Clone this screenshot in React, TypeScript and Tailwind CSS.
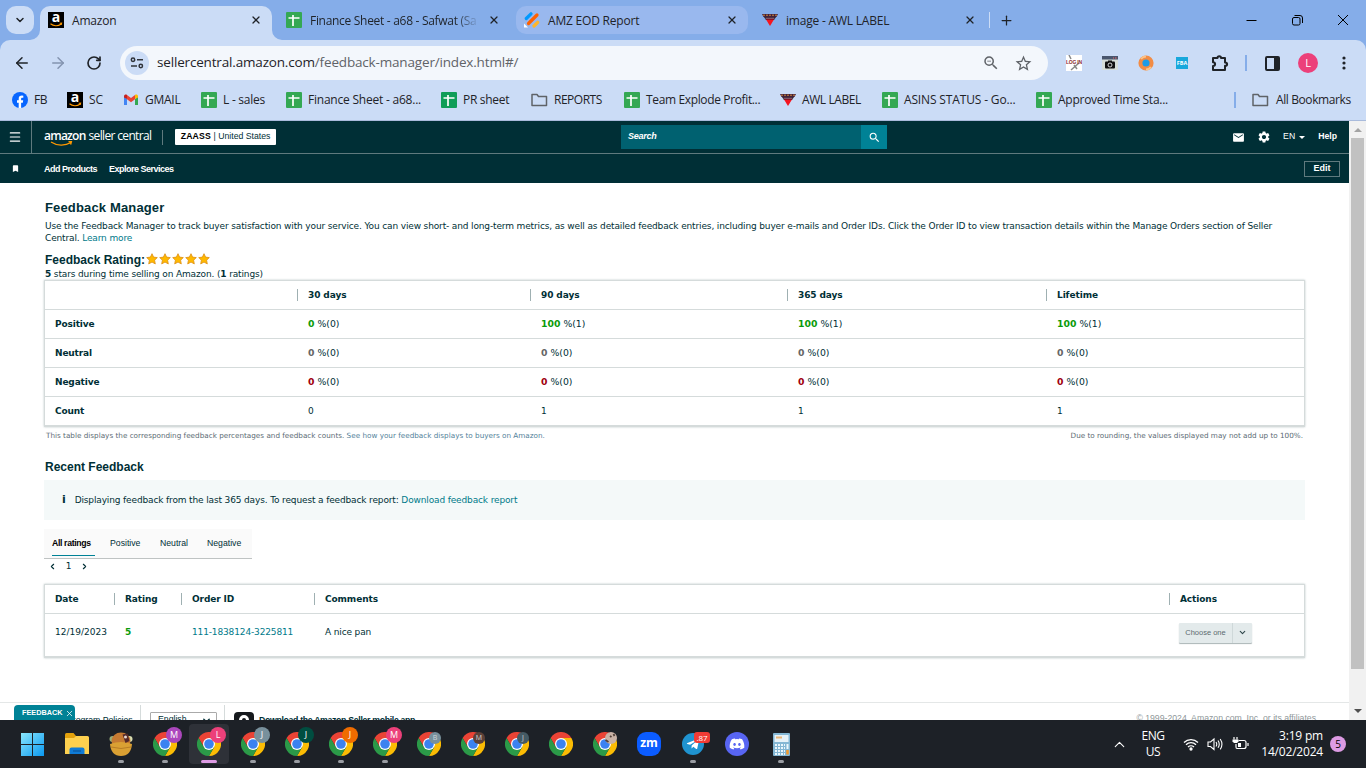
import type { ReactNode } from 'react';
import { ArrowLeft, ArrowRight, ChevronDown, ChevronLeft, ChevronRight, ChevronUp, Menu, Plus, RotateCw, X } from 'lucide-react';
import { FaDiscord, FaTelegramPlane } from 'react-icons/fa';
import { MdBookmark, MdEmail, MdSearch, MdSettings, MdStarBorder, MdZoomOut } from 'react-icons/md';

const UI = "font-['Open_Sans','Noto_Sans',sans-serif]";
const ARIAL = "font-['Liberation_Sans',Arial,sans-serif]";
const VERDANA = "font-['DejaVu_Sans',Verdana,sans-serif]";

function SheetIcon({ color = '#34a853' }: { color?: string }) {
  return (
    <svg width="16" height="16" viewBox="0 0 16 16" className="shrink-0">
      <rect width="16" height="16" rx="1" fill={color} />
      <path d="M2.5 6h11M7 3v11" stroke="#fff" strokeWidth="1.7" />
    </svg>
  );
}

function AmazonIcon() {
  return (
    <span className={`${UI} relative flex h-4 w-4 shrink-0 items-center justify-center bg-black text-[14px] font-bold leading-none text-white`}>
      <span className="-mt-[7px]">a</span>
      <svg width="16" height="16" viewBox="0 0 16 16" className="absolute inset-0">
        <path d="M2.500 11.800c3 2.400 7.500 2.500 10.400.4M11.700 11.200l1.900-.1-.4 1.900" stroke="#f90" strokeWidth="1.100" fill="none" />
      </svg>
    </span>
  );
}

function AwlIcon() {
  return (
    <svg width="16" height="16" viewBox="0 0 16 16" className="shrink-0">
      <path d="M0 2h16l-1.500 3h-13z" fill="#43213a" />
      <path d="M1 3.200h14" stroke="#d08a3a" strokeWidth="1" strokeDasharray="2 1" />
      <path d="M2 5h12l-2 3h-8z" fill="#201a26" />
      <path d="M3.500 6.200h9" stroke="#b06a80" />
      <path d="M4 7.500h8L8 14z" fill="#f4141f" />
    </svg>
  );
}

function FolderIcon() {
  return (
    <svg width="17" height="16" viewBox="0 0 17 16" className="shrink-0" fill="none" stroke="#5f6368" strokeWidth="1.500">
      <path d="M1 2.500h5l1.500 2h8v9H1z" strokeLinejoin="round" />
    </svg>
  );
}

function FacebookIcon() {
  return (
    <svg width="16" height="16" viewBox="0 0 16 16" className="shrink-0">
      <circle cx="8" cy="8" r="8" fill="#0866ff" />
      <path d="M6.700 16v-5.300H5V8.200h1.700V7c0-2.400 1.100-3.400 3.300-3.400l1.300.1v2.100h-.9c-1 0-1.300.4-1.300 1.300v1.100h2.100l-.4 2.500H9.100V16z" fill="#fff" />
    </svg>
  );
}

function GmailIcon() {
  return (
    <svg width="16" height="16" viewBox="0 0 16 16" className="shrink-0">
      <path d="M1 4v9h3V7z" fill="#4285f4" />
      <path d="M12 7v6h3V4z" fill="#34a853" />
      <path d="M1 4.500C1 2.500 3 2 4 3v4L1 5.500z" fill="#c5221f" />
      <path d="M15 4.500C15 2.500 13 2 12 3v4l3-1.500z" fill="#fbbc04" />
      <path d="M4 3l4 3 4-3v4.200L8 10.200 4 7.200z" fill="#ea4335" />
    </svg>
  );
}

function JotformIcon() {
  return (
    <svg width="16" height="16" viewBox="0 0 16 16" className="shrink-0" strokeLinecap="round" strokeWidth="3.200">
      <path d="M2.300 6.500l4.700-4.700" stroke="#0099ff" />
      <path d="M4.500 11.500l8.500-8.500" stroke="#ff6100" />
      <path d="M10 14l3.700-3.700" stroke="#ffb629" />
      <path d="M0 11.500v4h4z" fill="#fff" />
    </svg>
  );
}

const bookmarks: { label: string; icon: ReactNode; width: string; tracking: string }[] = [
  { label: 'FB', icon: <FacebookIcon />, width: 'w-[55px]', tracking: '-tracking-[0.5px]' },
  { label: 'SC', icon: <AmazonIcon />, width: 'w-[56px]', tracking: '-tracking-[0.2px]' },
  { label: 'GMAIL', icon: <GmailIcon />, width: 'w-[78px]', tracking: '-tracking-[0.25px]' },
  { label: 'L - sales', icon: <SheetIcon />, width: 'w-[85px]', tracking: '-tracking-[0.25px]' },
  { label: 'Finance Sheet - a68...', icon: <SheetIcon />, width: 'w-[155px]', tracking: '-tracking-[0.22px]' },
  { label: 'PR sheet', icon: <SheetIcon color="#0f9d58" />, width: 'w-[90px]', tracking: '-tracking-[0.3px]' },
  { label: 'REPORTS', icon: <FolderIcon />, width: 'w-[93px]', tracking: '-tracking-[0.5px]' },
  { label: 'Team Explode Profit...', icon: <SheetIcon />, width: 'w-[156px]', tracking: '-tracking-[0.36px]' },
  { label: 'AWL LABEL', icon: <AwlIcon />, width: 'w-[102px]', tracking: '-tracking-[0.4px]' },
  { label: 'ASINS STATUS - Go...', icon: <SheetIcon />, width: 'w-[154px]', tracking: '-tracking-[0.15px]' },
  { label: 'Approved Time Sta...', icon: <SheetIcon />, width: 'w-[160px]', tracking: '-tracking-[0.26px]' },
];

function TabStrip() {
  return (
    <div className="flex h-10 items-start bg-[#85ade9] pl-1.5 pt-1.5 text-[12px] -tracking-[0.2px] text-[#1f2328]">
      <button className="flex h-7 w-7 items-center justify-center rounded-[10px] bg-[#cbdcf6]">
        <ChevronDown size={12} strokeWidth={3} />
      </button>
      <div className="relative ml-1.5 flex h-[34px] w-[232px] items-center rounded-t-[10px] bg-[#cbdcf6] pb-1.5 pl-2">
        <svg width="10" height="10" className="absolute -left-2.5 bottom-0" fill="#cbdcf6"><path d="M10 0v10H0A10 10 0 0 0 10 0z" /></svg>
        <svg width="10" height="10" className="absolute -right-2.5 bottom-0" fill="#cbdcf6"><path d="M0 0v10h10A10 10 0 0 1 0 0z" /></svg>
        <AmazonIcon />
        <span className="ml-2 w-[178px] pt-0.5">Amazon</span>
        <X size={12} strokeWidth={2.500} />
      </div>
      <div className="flex h-7 w-[244px] items-center pl-3.5">
        <SheetIcon />
        <span className="ml-2 w-[170px] overflow-hidden whitespace-nowrap pt-0.5 -tracking-[0.3px] [mask-image:linear-gradient(to_right,#000_85%,transparent)]">Finance Sheet - a68 - Safwat (Sa</span>
        <X size={12} strokeWidth={2.500} className="ml-2" />
      </div>
      <div className="flex h-7 w-[232px] items-center rounded-[10px] bg-[#99b8ee] pl-2">
        <JotformIcon />
        <span className="ml-2 w-[178px] pt-0.5">AMZ EOD Report</span>
        <X size={12} strokeWidth={2.500} />
      </div>
      <div className="flex h-7 w-[241px] items-center pl-3.5">
        <AwlIcon />
        <span className="ml-2 w-[178px] pt-0.5">image - AWL LABEL</span>
        <X size={12} strokeWidth={2.500} />
      </div>
      <div className="mt-1.5 h-4 w-px bg-[#cbdcf6]" />
      <div className="flex h-7 w-8 items-center justify-center"><Plus size={15} /></div>
      <div className="ml-auto flex h-7 items-center pr-[17px] text-black">
        <svg width="104" height="12" viewBox="0 0 104 12" fill="none" stroke="currentColor">
          <path d="M1.500 6.500h10M93 1l10 10M103 1L93 11" />
          <rect x="47.500" y="3.500" width="7.500" height="7.500" rx="1.500" />
          <path d="M49.500 1.500h5.500a2.500 2.500 0 0 1 2.500 2.500v5" />
        </svg>
      </div>
    </div>
  );
}

function Toolbar() {
  return (
    <div className="flex h-[46px] items-center pl-[13px] text-[#1f2328]">
      <ArrowLeft size={18} strokeWidth={2} />
      <ArrowRight size={18} className="ml-[18px] text-[#8494b0]" strokeWidth={2} />
      <RotateCw size={16} className="ml-[19px]" strokeWidth={2.500} />
      <div className="ml-[18px] flex h-[34px] w-[928px] items-center rounded-full bg-[#f3f7fc] pl-[5px] pr-[15px]">
        <span className="flex h-6 w-6 items-center justify-center rounded-full bg-[#cbdcf6]">
          <svg width="14" height="14" viewBox="0 0 14 14" fill="none" stroke="#30343a" strokeWidth="1.500">
            <circle cx="3" cy="3.700" r="1.700" /><path d="M7 3.700H13M1 10h6" /><circle cx="10.800" cy="10" r="1.700" />
          </svg>
        </span>
        <span className="ml-2 whitespace-nowrap text-[13.500px] leading-none -tracking-[0.17px] text-[#5f6368]">
          <span className="text-[#1f2328]">sellercentral.amazon.com</span>/feedback-manager/index.html#/
        </span>
        <MdZoomOut size={18} className="ml-auto text-[#5f6368]" />
        <MdStarBorder size={19} className="ml-3.5 text-[#5f6368]" />
      </div>
      <svg width="16" height="16" viewBox="0 0 16 16" className="ml-[18px]">
        <rect width="16" height="16" fill="#fff" />
        <path d="M3 0l2 4M13 8L5 15M8 10l3 4" stroke="#888" strokeWidth="1.500" />
        <text x="0" y="8.500" fontSize="5" fontWeight="bold" textLength="16" fill="#8c2b31" fontFamily="Liberation Sans">LOG IN</text>
      </svg>
      <svg width="16" height="14" viewBox="0 0 16 14" className="ml-5">
        <rect width="16" height="14" fill="#d7ded9" /><rect width="16" height="3.500" fill="#49566e" />
        <path d="M11 2h1M13 2h1.500" stroke="#e66" /><rect x="3" y="5.500" width="10" height="7" rx="1" fill="#111" /><rect x="6" y="4.500" width="4" height="2" fill="#111" />
        <circle cx="8" cy="9" r="2" fill="none" stroke="#fff" strokeWidth=".8" />
      </svg>
      <svg width="16" height="16" viewBox="0 0 16 16" className="ml-5">
        <circle cx="8" cy="8" r="5.600" fill="#1d9be6" stroke="#f28c45" strokeWidth="4" />
        <path d="M3 4a6.400 6.400 0 0 1 5-2.500M13 12a6.400 6.400 0 0 1-5 2.400" stroke="#fbc489" strokeWidth="2" fill="none" />
      </svg>
      <span className="ml-[22px] flex h-3 w-3 items-center justify-center bg-[#18a8dc] text-[5.500px] font-bold text-white">FBA</span>
      <svg width="18" height="18" viewBox="0 0 18 18" className="ml-[23px]" fill="none" stroke="#1f2328" strokeWidth="2">
        <path d="M2 4h4.500c0-2.500 3.500-2.500 3.500 0h4v4.500c2.800 0 2.800 3.300 0 3.300V16H2v-4c2.800 0 2.800-3.800 0-3.800z" strokeLinejoin="round" />
      </svg>
      <div className="ml-4 h-4 w-0.5 bg-[#85ade9]" />
      <svg width="15" height="15" viewBox="0 0 15 15" className="ml-[18px]">
        <rect x="1" y="1" width="13" height="13" rx="1" fill="none" stroke="#1f2328" strokeWidth="2" /><path d="M9 1h5v13H9z" fill="#1f2328" />
      </svg>
      <span className="ml-[18px] flex h-5 w-5 items-center justify-center rounded-full bg-[#ec407a] text-[11px] text-white">L</span>
      <svg width="4" height="16" viewBox="0 0 4 16" className="ml-6" fill="#1f2328">
        <circle cx="2" cy="3" r="1.600" /><circle cx="2" cy="8" r="1.600" /><circle cx="2" cy="13" r="1.600" />
      </svg>
    </div>
  );
}

function Bookmarks() {
  return (
    <div className="flex h-[34px] items-center pb-[7px] pl-3 pt-px text-[12px] text-[#1f2328]">
      {bookmarks.map((b) => (
        <div key={b.label} className={`${b.width} flex shrink-0 items-center gap-1.5 whitespace-nowrap`}>
          {b.icon}
          <span className={b.tracking}>{b.label}</span>
        </div>
      ))}
      <div className="ml-[38px] h-4 w-0.5 bg-[#85ade9]" />
      <div className="ml-4 flex items-center gap-[7px] whitespace-nowrap -tracking-[0.4px]"><FolderIcon />All Bookmarks</div>
    </div>
  );
}

function SellerHeader() {
  return (
    <header className={`${ARIAL} text-white`}>
      <div className="flex h-[33px] items-center border-b border-[#5f7a7e] bg-[#002f36]">
        <div className="flex h-full w-8 items-center justify-center border-r border-[#5f7a7e]">
          <Menu size={14} strokeWidth={2} className="-ml-px -mt-px" />
        </div>
        <div className={`${UI} relative ml-3 flex w-[107px] items-baseline gap-[3px] whitespace-nowrap pb-0.5 text-[12px] leading-none`}>
          <span className="font-semibold -tracking-[0.75px]">amazon</span>
          <span className="-tracking-[0.66px]">seller central</span>
          <svg width="24" height="6" viewBox="0 0 24 6" className="absolute left-1.5 top-[11px]" fill="none" stroke="#f90" strokeWidth="1.200">
            <path d="M1 1c6 4 14 4 20 .6M18.500.7h3l-.8 3" />
          </svg>
        </div>
        <div className="ml-[11px] h-[15px] w-px bg-[#5f7a7e]" />
        <div className="ml-3 flex h-4 w-[101px] items-center justify-center whitespace-nowrap rounded-[1px] bg-white text-[8.700px] text-[#002f36]">
          <b className="tracking-[0.2px] text-black">ZAASS</b>&nbsp;| United States
        </div>
        <div className="ml-[345px] flex h-6 w-60 items-center bg-[#006170] pl-[7px] text-[9px] font-bold italic -tracking-[0.25px]">Search</div>
        <div className="flex h-6 w-[26px] items-center justify-center bg-[#008296]"><MdSearch size={13} /></div>
        <div className="ml-auto flex items-center pr-3 text-[8.700px] font-bold">
          <MdEmail size={13} />
          <MdSettings size={14} className="ml-3" />
          <span className="ml-3 font-normal">EN</span>
          <span className="ml-1 border-x-[3px] border-t-[3px] border-x-transparent border-t-white" />
          <span className="ml-[13px]">Help</span>
        </div>
      </div>
      <div className="flex h-[29px] items-center bg-[#002f36] text-[9px] font-bold -tracking-[0.5px]">
        <MdBookmark size={9} className="ml-[11px]" />
        <span className="ml-6 pt-[3px]">Add Products</span>
        <span className="ml-3 pt-[3px]">Explore Services</span>
        <button className="ml-auto mr-[9px] h-4 w-9 border border-[#5f7a7e] tracking-normal">Edit</button>
      </div>
    </header>
  );
}

const periods = ['30 days', '90 days', '365 days', 'Lifetime'];
const rows = [
  { label: 'Positive', color: 'text-[#0a9b0a]', values: [[0, 0], [100, 1], [100, 1], [100, 1]] },
  { label: 'Neutral', color: 'text-[#666]', values: [[0, 0], [0, 0], [0, 0], [0, 0]] },
  { label: 'Negative', color: 'text-[#a0000f]', values: [[0, 0], [0, 0], [0, 0], [0, 0]] },
];
const counts = [0, 1, 1, 1];
const cols = 'grid grid-cols-[252px_233px_257px_259px_1fr] items-center';

function HeaderCell({ children }: { children: ReactNode }) {
  return <div className="flex h-3 items-center border-l border-[#9fb0b2] pl-2.5 font-bold -tracking-[0.1px]">{children}</div>;
}

function RatingsTable() {
  return (
    <div className="h-[147px] border border-b-2 border-[#d5dbdb] shadow-[0_0_2px_#bcc6c6]">
      <div className={`${cols} h-7`}>
        <span />
        {periods.map((p) => <HeaderCell key={p}>{p}</HeaderCell>)}
      </div>
      {rows.map((row) => (
        <div key={row.label} className={`${cols} h-[29px] border-t border-[#d5dbdb]`}>
          <b className="pl-2.5">{row.label}</b>
          {row.values.map(([pct, count], i) => (
            <span key={i} className="pl-[11px] text-[9.300px] tracking-normal">
              <b className={row.color}>{pct}</b> %({count})
            </span>
          ))}
        </div>
      ))}
      <div className={`${cols} h-[29px] border-t border-[#d5dbdb]`}>
        <b className="pl-2.5">Count</b>
        {counts.map((c, i) => <span key={i} className="pl-[11px]">{c}</span>)}
      </div>
    </div>
  );
}

function StarRow() {
  return (
    <span className="-mt-[3px] ml-px flex gap-px">
      {[0, 1, 2, 3, 4].map((i) => (
        <svg key={i} width="12" height="12" viewBox="0 0 12 12">
          <path d="M6 .7l1.600 3.400 3.700.5-2.700 2.600.7 3.700L6 9.100l-3.300 1.800.7-3.700L.7 4.600l3.700-.5z" fill="#ffb900" stroke="#dd8f16" strokeWidth=".8" />
        </svg>
      ))}
    </span>
  );
}

function FeedbackList() {
  const grid = 'grid grid-cols-[69px_67px_133px_855px_1fr] items-center';
  return (
    <div className="mt-[11px] h-[74px] border border-b-2 border-[#d5dbdb] shadow-[0_0_2px_#bcc6c6]">
      <div className={`${grid} h-7`}>
        <b className="pl-2.5">Date</b>
        <HeaderCell>Rating</HeaderCell>
        <HeaderCell>Order ID</HeaderCell>
        <HeaderCell>Comments</HeaderCell>
        <HeaderCell>Actions</HeaderCell>
      </div>
      <div className={`${grid} h-9 border-t border-[#d5dbdb]`}>
        <span className="pl-2.5 tracking-normal">12/19/2023</span>
        <b className="pl-[11px] text-[#0a9b0a]">5</b>
        <span className="pl-[11px] text-[#007a8a]">111-1838124-3225811</span>
        <span className="pl-[11px]">A nice pan</span>
        <div className={`${ARIAL} ml-2.5 mt-0.5 flex h-5 w-[73px] items-center rounded-[1px] bg-[#e3eaeb] text-[7.500px] tracking-normal text-[#5c6b70] shadow-[0_1px_1px_#aab5b6]`}>
          <span className="flex h-full w-[54px] items-center justify-center border-r border-[#cfd8d9]">Choose one</span>
          <ChevronDown size={9} className="ml-[5px] text-[#30474c]" strokeWidth={3} />
        </div>
      </div>
    </div>
  );
}

function PageFooter() {
  return (
    <footer className={`${ARIAL} relative mt-[44px] h-[18px] overflow-hidden border-t border-[#e4e7e7] text-[8.700px] text-[#002f36]`}>
      <div className="flex h-9 items-center whitespace-nowrap">
        <span className="w-[140px] pl-[67px]">Program Policies</span>
        <span className="-mt-4 h-4 w-px bg-[#d5dbdb]" />
        <span className="relative -top-px ml-[9px] flex h-4 w-[67px] items-center justify-between rounded-[1px] border border-[#aaa] pl-[7px] pr-1">
          English<ChevronDown size={11} strokeWidth={3} />
        </span>
        <span className="-mt-4 ml-[7px] h-4 w-px bg-[#d5dbdb]" />
        <span className="relative top-px ml-[9px] flex h-5 w-5 items-center justify-center rounded-sm bg-[#16191d]">
          <span className="-mt-0.5 h-3 w-2.5 rounded-full border-[3px] border-white" />
        </span>
        <span className="ml-[5px] font-bold -tracking-[0.3px]">Download the Amazon Seller mobile app</span>
        <span className="ml-auto pb-1 pr-[33px] text-[#8f989a]">© 1999-2024, Amazon.com, Inc. or its affiliates</span>
      </div>
      <div className="absolute left-3.5 top-[2px] flex h-5 w-[61px] items-start gap-0.5 rounded-t-sm bg-[#008296] pl-2 pt-1 text-[7.300px] font-bold leading-[8px] text-white">
        FEEDBACK<X size={9} />
      </div>
    </footer>
  );
}

function SellerPage() {
  return (
    <div className="flex h-[599px]">
      <div className="w-[1349px] bg-white">
        <SellerHeader />
        <main className={`${VERDANA} ml-11 w-[1261px] text-[9px] leading-3 -tracking-[0.14px] text-[#002f36]`}>
          <h1 className={`${ARIAL} pl-px pt-[17px] text-[13px] font-bold leading-4 tracking-[0.15px]`}>Feedback Manager</h1>
          <p className="mt-[4px] w-[1240px] whitespace-nowrap pl-px">
            Use the Feedback Manager to track buyer satisfaction with your service. You can view short- and long-term metrics, as well as detailed feedback entries, including buyer e-mails and Order IDs. Click the Order ID to view transaction details within the Manage Orders section of Seller
            <br />
            Central. <a className="text-[#007a8a]">Learn more</a>
          </p>
          <h2 className={`${ARIAL} mt-[9px] flex items-center pl-px text-[12px] font-bold leading-[15px] tracking-normal`}>
            Feedback Rating:<StarRow />
          </h2>
          <p className="pl-px"><b>5</b> stars during time selling on Amazon. (<b>1</b> ratings)</p>
          <RatingsTable />
          <div className="mt-[3px] flex justify-between px-0.5 text-[7.240px] tracking-normal text-[#5b6b74]">
            <span>This table displays the corresponding feedback percentages and feedback counts. <a className="text-[#52829a]">See how your feedback displays to buyers on Amazon.</a></span>
            <span>Due to rounding, the values displayed may not add up to 100%.</span>
          </div>
          <h2 className={`${ARIAL} mt-[17px] pl-px text-[12px] font-bold leading-4 tracking-normal`}>Recent Feedback</h2>
          <div className="mt-[5px] flex h-10 items-center bg-[#f4f9f9] pl-[18px]">
            <b className="mr-[9px] text-[11px]">i</b>
            Displaying feedback from the last 365 days. To request a feedback report:&nbsp;<a className="text-[#007a8a]">Download feedback report</a>
          </div>
          <nav className={`${ARIAL} mt-[9px] flex h-[30px] w-52 border-b border-[#bfc3c3] bg-[#fafafa] pl-2 text-[8.700px] leading-[28px] tracking-normal`}>
            <span className="h-[27px] w-[43px] border-b border-[#008296] font-bold text-black -tracking-[0.35px]">All ratings</span>
            <span className="ml-[15px] w-[50px]">Positive</span>
            <span className="w-[47px]">Neutral</span>
            <span>Negative</span>
          </nav>
          <div className="flex h-3.5 items-center pl-1">
            <ChevronLeft size={9} strokeWidth={3} />
            <span className="mx-2 w-[7px] text-center">1</span>
            <ChevronRight size={9} strokeWidth={3} />
          </div>
          <FeedbackList />
        </main>
        <PageFooter />
      </div>
      <div className="flex w-[17px] flex-col items-center bg-[#f1f1f1]">
        <span className="mt-[7px] border-x-4 border-b-4 border-x-transparent border-b-[#a3a3a3]" />
        <span className="mt-1.5 h-[531px] w-[13px] bg-[#c1c1c1]" />
        <span className="mt-[40px] border-x-4 border-t-4 border-x-transparent border-t-[#505050]" />
      </div>
    </div>
  );
}

function ChromeIcon() {
  return (
    <svg width="24" height="24" viewBox="0 0 24 24">
      <path d="M1.600 6A12 12 0 0 1 22.400 6H12L6.800 15z" fill="#ea4335" />
      <path d="M22.400 6A12 12 0 0 1 12 24l5.200-9L12 6z" fill="#fbbc04" />
      <path d="M12 24A12 12 0 0 1 1.600 6l5.200 9h10.400z" fill="#2b9a48" />
      <circle cx="12" cy="12" r="6" fill="#fff" />
      <circle cx="12" cy="12" r="4.800" fill="#3b82f0" />
    </svg>
  );
}

const profiles = [
  { letter: 'M', badge: 'bg-[#ab47bc]', open: true },
  { letter: 'L', badge: 'bg-[#ec407a]', open: true, active: true },
  { letter: 'J', badge: 'bg-[#78909c]', open: true },
  { letter: 'J', badge: 'bg-[#004d40]', open: true },
  { letter: 'J', badge: 'bg-[#ef6c00]', open: true },
  { letter: 'M', badge: 'bg-[#ec407a]', open: true },
  { letter: 'B', badge: 'bg-[#78909c]' },
  { letter: 'M', badge: 'bg-[#5d4037]' },
  { letter: 'J', badge: 'bg-[#455a64]' },
];

function Slot({ children, open, active }: { children: ReactNode; open?: boolean; active?: boolean }) {
  return (
    <div className="relative flex h-12 w-11 shrink-0 items-center justify-center">
      {active && <span className="absolute inset-x-0.5 inset-y-1 rounded bg-[#2e3138]" />}
      <span className="relative flex">{children}</span>
      {open && <span className={active ? 'absolute bottom-[5px] h-[3px] w-4 rounded-full bg-[#dd9be4]' : 'absolute bottom-[5px] h-[3px] w-1.5 rounded-full bg-[#9a9da3]'} />}
    </div>
  );
}

function Taskbar() {
  return (
    <div className={`${UI} flex h-12 items-center bg-[#1d2127] pl-[11px] text-[12px] text-white`}>
      <Slot>
        <svg width="23" height="23" viewBox="0 0 23 23" className="mr-px">
          <defs><linearGradient id="win" x1="0" y1="0" x2="1" y2="1"><stop stopColor="#8ae7fd" /><stop offset="1" stopColor="#0a98f0" /></linearGradient></defs>
          <path d="M0 0h11v11H0zM12 0h11v11H12zM0 12h11v11H0zM12 12h11v11H12z" fill="url(#win)" />
        </svg>
      </Slot>
      <Slot>
        <svg width="24" height="22" viewBox="0 0 24 22">
          <path d="M0 1.500Q0 0 1.500 0h7l2.500 3v4H0z" fill="#e3a10c" />
          <path d="M0 5h9l2-2h11.500Q24 3 24 4.500V21H0z" fill="#fdd04f" />
          <path d="M4.500 21v-4.500q0-2 2-2h11q2 0 2 2V21z" fill="#0f7bd6" /><path d="M8 18h8" stroke="#0a4f91" />
        </svg>
      </Slot>
      <Slot open>
        <svg width="24" height="24" viewBox="0 0 24 24">
          <circle cx="3.500" cy="7" r="3" fill="#9aae7b" /><circle cx="20.500" cy="7" r="3" fill="#d8dcb0" />
          <ellipse cx="12" cy="9" rx="9.500" ry="8.500" fill="#c57a32" />
          <path d="M1 12q11-4 22 0-1 12-11 12T1 12z" fill="#daa033" />
          <path d="M13.500 2.500l5-1 2 7.500-4 2z" fill="#54292a" /><circle cx="16.500" cy="5" r="1.500" fill="#e8d9d0" />
          <path d="M2 15q10 3 20 0" stroke="#b87d26" fill="none" />
        </svg>
      </Slot>
      {profiles.map((p, i) => (
        <Slot key={i} open={p.open} active={p.active}>
          <ChromeIcon />
          {p.open ? (
            <span className={`${p.badge} absolute -right-[5px] -top-[5px] flex h-4 w-4 items-center justify-center rounded-full text-[9px]`}>{p.letter}</span>
          ) : (
            <span className={`${p.badge} absolute right-0 top-0 flex h-3 w-3 items-center justify-center rounded-full text-[7px] text-[#cdd5d9]`}>{p.letter}</span>
          )}
        </Slot>
      ))}
      <Slot><ChromeIcon /></Slot>
      <Slot>
        <ChromeIcon />
        <svg width="12" height="12" viewBox="0 0 12 12" className="absolute right-0 top-0">
          <circle cx="6" cy="6" r="6" fill="#c9b2a6" /><path d="M.5 8l3 2M5 4l1.500 1M8.500 2l1 2" stroke="#514038" strokeWidth="1.800" fill="none" />
        </svg>
      </Slot>
      <Slot>
        <span className="flex h-6 w-6 items-center justify-center rounded-[9px] bg-[#0b5cff] pb-0.5 text-[12px] font-bold leading-none">zm</span>
      </Slot>
      <Slot open>
        <span className="flex h-[22px] w-[22px] items-center justify-center rounded-full bg-[#1f93d0]"><FaTelegramPlane size={14} /></span>
        <span className="absolute -right-[6px] -top-px flex h-[11px] w-4 items-center justify-center rounded-[3px] bg-[#f03b35] text-[8px]">.87</span>
      </Slot>
      <Slot>
        <span className="flex h-6 w-6 items-center justify-center rounded-full bg-[#5865f2]"><FaDiscord size={16} /></span>
      </Slot>
      <Slot open>
        <svg width="17" height="23" viewBox="0 0 17 23">
          <rect width="17" height="23" rx="1" fill="#84b7d4" /><rect x="1.500" y="2" width="14" height="7" fill="#e7f2f8" /><rect x="3" y="3.500" width="6" height="2" fill="#e9b678" />
          <path d="M2 12h10M2 15h10M2 18h10M2 21h10" stroke="#eaf6fc" strokeWidth="2" strokeDasharray="2 1" /><path d="M14.500 11v5" stroke="#eaf6fc" strokeWidth="2" /><path d="M14.500 17v4.500" stroke="#f39a2b" strokeWidth="2.500" />
        </svg>
      </Slot>
      <div className="ml-auto flex items-center pr-5">
        <ChevronUp size={17} strokeWidth={1.500} />
        <div className="ml-3 w-[26px] text-center leading-4 -tracking-[0.4px]">ENG<br />US</div>
        <svg width="16" height="14" viewBox="0 0 16 14" className="ml-[17px]" fill="none" stroke="white" strokeWidth="1.300">
          <path d="M1 5.500a10 10 0 0 1 14 0M3 7.800a7 7 0 0 1 10 0M5 10a4.300 4.300 0 0 1 6 0" /><circle cx="8" cy="12" r="1" fill="#fff" />
        </svg>
        <svg width="17" height="14" viewBox="0 0 17 14" className="ml-2" fill="none" stroke="white" strokeWidth="1.100">
          <path d="M1 5h2.500L7 2v10.500L3.500 9.500H1zM9 5q1.500 2.200 0 4.500M11 3.500q2.500 3.700 0 7.300M13.200 2q3.500 5.200 0 10.400" />
        </svg>
        <svg width="17" height="15" viewBox="0 0 17 15" className="ml-2" fill="none" stroke="white" strokeWidth="1.200">
          <path d="M6.500 3.500H12q2 0 2 2v4q0 2-2 2H5q-1 0-1-1.500V7M16 6v3M2 0v2.500M5 0v2.500" /><path d="M.5 2.500h6v2L5 6H2L.5 4.500z" fill="#fff" stroke="none" /><path d="M6 6h3v4H6z" fill="#fff" stroke="none" />
        </svg>
        <div className="ml-[7px] w-[67px] whitespace-nowrap text-right leading-4 -tracking-[0.2px]">3:19 pm<br />14/02/2024</div>
        <span className="ml-[7px] flex h-4 w-4 items-center justify-center rounded-full bg-[#dd9be4] text-[10px] text-black">5</span>
      </div>
    </div>
  );
}

export default function App() {
  return (
    <div className={`${UI} h-[768px] w-[1366px] overflow-hidden bg-[#85ade9]`}>
      <TabStrip />
      <div className="h-[81px] rounded-t-[10px] border-b border-[#a9bbdc] bg-[#cbdcf6]">
        <Toolbar />
        <Bookmarks />
      </div>
      <SellerPage />
      <Taskbar />
    </div>
  );
}
